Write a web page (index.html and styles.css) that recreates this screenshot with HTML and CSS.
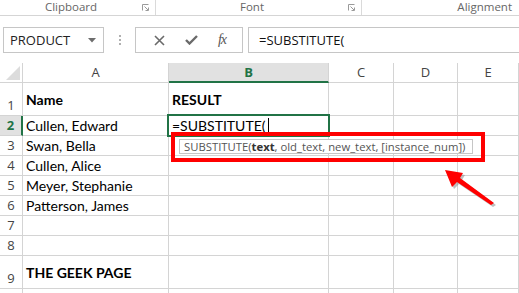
FILE: index.html
```html
<!DOCTYPE html>
<html lang="en">
<head>
  <meta charset="UTF-8">
  <title>Excel SUBSTITUTE</title>
  <link rel="stylesheet" href="styles.css">
</head>
<body>
  <div class="ribbon">
    <div class="group g-clip">
      <span class="group-label">Clipboard</span>
      <svg class="launcher" width="7" height="7" viewBox="0 0 7 7"><path d="M0.5 6.5V0.5H6.5" fill="none" stroke="#9a9a9a"/><path d="M2.5 2.5L6 6M3.5 6.5H6.5V3.5" fill="none" stroke="#9a9a9a"/></svg>
    </div>
    <div class="group g-font">
      <span class="group-label">Font</span>
      <svg class="launcher" width="7" height="7" viewBox="0 0 7 7"><path d="M0.5 6.5V0.5H6.5" fill="none" stroke="#9a9a9a"/><path d="M2.5 2.5L6 6M3.5 6.5H6.5V3.5" fill="none" stroke="#9a9a9a"/></svg>
    </div>
    <div class="group g-align">
      <span class="group-label">Alignment</span>
    </div>
  </div>

  <div class="formula-bar">
    <div class="name-box">
      <span>PRODUCT</span>
      <svg width="8" height="5" viewBox="0 0 8 5"><path d="M0 0H8L4 4.5Z" fill="#6d6d6d"/></svg>
    </div>
    <div class="grip"><i></i><i></i><i></i></div>
    <div class="fx-buttons">
      <svg width="11" height="11" viewBox="0 0 11 11"><path d="M1 1L10 10M10 1L1 10" stroke="#6a6a6a" stroke-width="1.6"/></svg>
      <svg width="13" height="10" viewBox="0 0 13 10"><path d="M1 5L4.5 8.5L12 1" fill="none" stroke="#6a6a6a" stroke-width="2.4"/></svg>
      <span class="fx">fx</span>
    </div>
    <div class="formula-input">=SUBSTITUTE(</div>
  </div>

  <div class="sheet">
    <div class="grid">
      <div class="corner"><svg width="14" height="14" viewBox="0 0 14 14"><path d="M14 0V14H0Z" fill="#dcdcdc"/></svg></div>
      <div class="col-head">A</div>
      <div class="col-head active">B</div>
      <div class="col-head">C</div>
      <div class="col-head">D</div>
      <div class="col-head">E</div>

      <div class="row-head">1</div>
      <div class="cell bold">Name</div>
      <div class="cell bold">RESULT</div>
      <div class="cell"></div><div class="cell"></div><div class="cell"></div>

      <div class="row-head active">2</div>
      <div class="cell">Cullen, Edward</div>
      <div class="cell editing">=SUBSTITUTE(<span class="caret"></span></div>
      <div class="cell"></div><div class="cell"></div><div class="cell"></div>

      <div class="row-head">3</div>
      <div class="cell">Swan, Bella</div>
      <div class="cell"></div><div class="cell"></div><div class="cell"></div><div class="cell"></div>

      <div class="row-head">4</div>
      <div class="cell">Cullen, Alice</div>
      <div class="cell"></div><div class="cell"></div><div class="cell"></div><div class="cell"></div>

      <div class="row-head">5</div>
      <div class="cell">Meyer, Stephanie</div>
      <div class="cell"></div><div class="cell"></div><div class="cell"></div><div class="cell"></div>

      <div class="row-head">6</div>
      <div class="cell">Patterson, James</div>
      <div class="cell"></div><div class="cell"></div><div class="cell"></div><div class="cell"></div>

      <div class="row-head">7</div>
      <div class="cell"></div><div class="cell"></div><div class="cell"></div><div class="cell"></div><div class="cell"></div>

      <div class="row-head">8</div>
      <div class="cell"></div><div class="cell"></div><div class="cell"></div><div class="cell"></div><div class="cell"></div>

      <div class="row-head">9</div>
      <div class="cell bold">THE GEEK PAGE</div>
      <div class="cell"></div><div class="cell"></div><div class="cell"></div><div class="cell"></div>

      <div class="row-head last"></div>
      <div class="cell last"></div><div class="cell last"></div><div class="cell last"></div><div class="cell last"></div><div class="cell last"></div>
    </div>

    <div class="tooltip">SUBSTITUTE(<b>text</b>, old_text, new_text, [instance_num])</div>
    <div class="highlight"></div>
    <svg class="arrow" width="60" height="45" viewBox="0 0 60 45">
      <path d="M2 3L20 6L17 11L51 36L48 38L14 15L9 20Z" fill="#8a8a8a" opacity="0.55" transform="translate(2 2)"/>
      <path d="M2 3L20 6L17 11L51 36L48 38L14 15L9 20Z" fill="#f00"/>
    </svg>
  </div>
</body>
</html>
```

FILE: styles.css
```css
body {
  margin: 0;
  width: 519px;
  height: 293px;
  overflow: hidden;
  background: #fff;
  font-family: "Open Sans", "Liberation Sans", sans-serif;
}

/* ribbon group labels */
.ribbon {
  display: flex;
  height: 15px;
  border-bottom: 1px solid #d5d5d5;
  color: #666;
  font-size: 11.5px;
}

.group {
  display: flex;
  align-items: center;
  border-right: 1px solid #dadada;
  height: 15px;
}

.group-label {
  flex: 1;
  text-align: center;
  line-height: 13px;
  align-self: flex-start;
}

.launcher {
  margin-right: 6px;
  margin-top: -1px;
}

.g-clip {
  width: 155px;
}

.g-font {
  width: 205px;
}

.g-align {
  flex: 1;
  border-right: none;
}

.g-align .group-label {
  text-align: right;
  padding-right: 7px;
}

/* formula bar */
.formula-bar {
  display: flex;
  align-items: stretch;
  height: 26px;
  margin-top: 11px;
}

.name-box {
  box-sizing: border-box;
  width: 101px;
  margin-left: 3px;
  border: 1px solid #c6c6c6;
  display: flex;
  align-items: center;
  justify-content: space-between;
  padding: 0 7px 0 6px;
  font-size: 13px;
  color: #222;
}

.grip {
  width: 31px;
  display: flex;
  flex-direction: column;
  align-items: center;
  justify-content: center;
  gap: 2px;
}

.grip i {
  width: 2px;
  height: 2px;
  background: #b0b0b0;
}

.fx-buttons {
  box-sizing: border-box;
  width: 108px;
  border: 1px solid #c6c6c6;
  display: flex;
  align-items: center;
  justify-content: space-around;
  padding: 0 6px 0 8px;
}

.fx {
  font-family: "Liberation Serif", serif;
  font-style: italic;
  font-size: 14px;
  color: #555;
  letter-spacing: -1px;
}

.formula-input {
  flex: 1;
  margin-left: 5px;
  border: 1px solid #c6c6c6;
  border-right: none;
  padding-left: 10px;
  font-size: 13px;
  line-height: 24px;
  color: #111;
}

/* worksheet */
.sheet {
  position: relative;
  margin-top: 10px;
}

.grid {
  display: grid;
  grid-template-columns: 23px 146px 160px 65px 64px 1fr;
  grid-template-rows: 20px 33px repeat(7, 20px) 33px 5px;
  font-family: "Lato", "Liberation Sans", sans-serif;
  font-size: 14px;
}

.grid > div {
  box-sizing: border-box;
  border-right: 1px solid #d4d4d4;
  border-bottom: 1px solid #d4d4d4;
}

.grid > .last {
  border-bottom: none;
}

.corner {
  display: flex;
  align-items: flex-end;
  justify-content: flex-end;
  padding: 0 2px 2px 0;
}

.col-head {
  text-align: center;
  color: #444;
  font-family: "Open Sans", "Liberation Sans", sans-serif;
  font-size: 13px;
  line-height: 19px;
}

.col-head.active {
  background: #e1e1e1;
  color: #217346;
  font-weight: bold;
  border-bottom: 2px solid #217346 !important;
}

.row-head {
  color: #444;
  font-family: "Open Sans", "Liberation Sans", sans-serif;
  font-size: 13px;
  display: flex;
  align-items: flex-end;
  justify-content: center;
  padding-bottom: 1px;
}

.row-head.active {
  background: #e1e1e1;
  color: #217346;
  font-weight: bold;
  border-right: 2px solid #217346 !important;
}

.cell {
  padding-left: 3px;
  color: #000;
  white-space: nowrap;
  display: flex;
  align-items: center;
}

.cell.bold {
  font-weight: bold;
}

.editing {
  position: relative;
}

.editing::after {
  content: "";
  position: absolute;
  left: -2px;
  top: -2px;
  right: -2px;
  bottom: -2px;
  border: 2px solid #217346;
}

.caret {
  display: inline-block;
  width: 1px;
  height: 16px;
  background: #000;
  margin-left: 2px;
}

/* overlays */
.tooltip {
  position: absolute;
  left: 179px;
  top: 76px;
  box-sizing: border-box;
  width: 294px;
  height: 15px;
  border: 1px solid #c6c6c6;
  background: #fff;
  font-size: 11.3px;
  line-height: 13px;
  color: #555;
  padding-left: 4px;
  white-space: nowrap;
}

.tooltip b {
  color: #333;
}

.highlight {
  position: absolute;
  left: 171px;
  top: 69px;
  width: 306px;
  height: 22px;
  border: 4px solid #f00;
}

.arrow {
  position: absolute;
  left: 443px;
  top: 104px;
}
```
